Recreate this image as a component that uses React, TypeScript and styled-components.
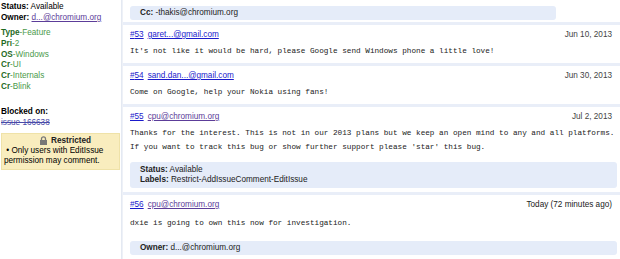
import styled, { createGlobalStyle } from 'styled-components';

const GlobalStyle = createGlobalStyle`
  html, body {
    margin: 0;
    padding: 0;
    background: #fff;
  }
  body {
    font-family: 'Liberation Sans', Arial, sans-serif;
    font-size: 8.2px;
    color: #000;
  }
`;

const Page = styled.div`
  display: flex;
  width: 620px;
  height: 259px;
  overflow: hidden;
`;

const Sidebar = styled.div`
  width: 122px;
  flex-shrink: 0;
  padding: 1px 0 0 1px;
  box-sizing: border-box;
  border-right: 1px solid #e4e9f2;
`;

const MetaRow = styled.div`
  line-height: 11px;
  margin-top: ${props => props.$top || 0}px;
  margin-bottom: ${props => props.$gap || 0}px;
`;

const Bold = styled.b`
  font-weight: bold;
`;

const Link = styled.a`
  color: ${props => (props.$visited ? '#5c3d99' : '#1a1acc')};
  text-decoration: underline;
`;

const LabelRow = styled.div`
  line-height: 10.8px;
  color: #4a9a4a;
`;

const LabelPrefix = styled.span`
  color: #1f6b1f;
  font-weight: bold;
`;

const Struck = styled.span`
  color: #4a4aa8;
  text-decoration: line-through;
`;

const RestrictedBox = styled.div`
  margin-top: 5px;
  width: 119px;
  background: #f9edbe;
  border: 1px solid #efe2a8;
  box-sizing: border-box;
  padding: 2px 1px 3px 2px;
  line-height: 10px;
`;

const RestrictedTitle = styled.div`
  display: flex;
  justify-content: center;
  align-items: center;
  gap: 3px;
  font-weight: bold;
  color: #222;
  padding-left: 8px;
`;

const Main = styled.div`
  flex: 1;
  display: flex;
  flex-direction: column;
  border-left: 1px solid #eef1f7;
`;

const Comment = styled.div`
  padding: 0 3px 0 7px;
  border-bottom: 3px solid #e9eef8;
  &:last-child {
    border-bottom: none;
  }
`;

const UpdateBox = styled.div`
  background: #e5ecf9;
  border-radius: 3px;
  padding: ${props => (props.$tall ? '3px 10px' : '2px 10px')};
  line-height: 10px;
  width: ${props => (props.$short ? '426px' : 'auto')};
  margin: ${props => props.$margin || '0'};
  box-sizing: border-box;
  color: #222;
`;

const Header = styled.div`
  display: flex;
  justify-content: space-between;
  align-items: baseline;
  padding-top: 4px;
  line-height: 11px;
`;

const Num = styled(Link)`
  margin-right: 4px;
`;

const Date = styled.span`
  color: ${props => (props.$dark ? '#222' : '#444')};
  margin-right: 5px;
`;

const Body = styled.pre`
  font-family: 'Liberation Mono', 'Courier New', monospace;
  font-size: 7.7px;
  line-height: ${props => props.$lh || 15}px;
  margin: ${props => props.$margin || '4px 0 4px 0'};
  color: #222;
  white-space: pre;
`;

function LockIcon() {
  return (
    <svg width="9" height="9" viewBox="0 0 9 9">
      <path d="M2.5 4V2.8a2 2 0 0 1 4 0V4" fill="none" stroke="#777" strokeWidth="1.3" />
      <rect x="1" y="4" width="7" height="5" fill="#777" />
    </svg>
  );
}

const labels = [
  ['Type', 'Feature'],
  ['Pri', '2'],
  ['OS', 'Windows'],
  ['Cr', 'UI'],
  ['Cr', 'Internals'],
  ['Cr', 'Blink'],
];

const comments = [
  {
    num: 53,
    who: 'garet...@gmail.com',
    date: 'Jun 10, 2013',
    text: "It's not like it would be hard, please Google send Windows phone a little love!",
  },
  {
    num: 54,
    who: 'sand.dan...@gmail.com',
    date: 'Jun 30, 2013',
    text: 'Come on Google, help your Nokia using fans!',
  },
];

export default function App() {
  return (
    <>
      <GlobalStyle />
      <Page>
        <Sidebar>
          <MetaRow>
            <Bold>Status:</Bold> Available
          </MetaRow>
          <MetaRow $gap={5}>
            <Bold>Owner:</Bold> <Link $visited>d...@chromium.org</Link>
          </MetaRow>
          {labels.map(([k, v], i) => (
            <LabelRow key={i}>
              <LabelPrefix>{k}</LabelPrefix>-{v}
            </LabelRow>
          ))}
          <MetaRow $top={13}>
            <Bold>Blocked on:</Bold>
          </MetaRow>
          <MetaRow>
            <Struck>issue 166638</Struck>
          </MetaRow>
          <RestrictedBox>
            <RestrictedTitle>
              <LockIcon />
              Restricted
            </RestrictedTitle>
            <div>&nbsp;• Only users with EditIssue</div>
            <div>permission may comment.</div>
          </RestrictedBox>
        </Sidebar>
        <Main>
          <Comment>
            <UpdateBox $short $margin="6px 0 2px 0">
              <Bold>Cc:</Bold> -thakis@chromium.org
            </UpdateBox>
          </Comment>
          {comments.map(c => (
            <Comment key={c.num}>
              <Header>
                <span>
                  <Num>#{c.num}</Num>
                  <Link>{c.who}</Link>
                </span>
                <Date>{c.date}</Date>
              </Header>
              <Body>{c.text}</Body>
            </Comment>
          ))}
          <Comment>
            <Header>
              <span>
                <Num>#55</Num>
                <Link $visited>cpu@chromium.org</Link>
              </span>
              <Date>Jul 2, 2013</Date>
            </Header>
            <Body $lh={14} $margin="4px 0 8px 0">
              {'Thanks for the interest. This is not in our 2013 plans but we keep an open mind to any and all platforms.\nIf you want to track this bug or show further support please \'star\' this bug.'}
            </Body>
            <UpdateBox $tall $margin="0 0 4px 0">
              <div>
                <Bold>Status:</Bold> Available
              </div>
              <div>
                <Bold>Labels:</Bold> Restrict-AddIssueComment-EditIssue
              </div>
            </UpdateBox>
          </Comment>
          <Comment>
            <Header>
              <span>
                <Num>#56</Num>
                <Link $visited>cpu@chromium.org</Link>
              </span>
              <Date $dark>Today (72 minutes ago)</Date>
            </Header>
            <Body $margin="6px 0 10px 0">dxie is going to own this now for investigation.</Body>
            <UpdateBox $margin="0 0 0 0">
              <Bold>Owner:</Bold> d...@chromium.org
            </UpdateBox>
          </Comment>
        </Main>
      </Page>
    </>
  );
}
